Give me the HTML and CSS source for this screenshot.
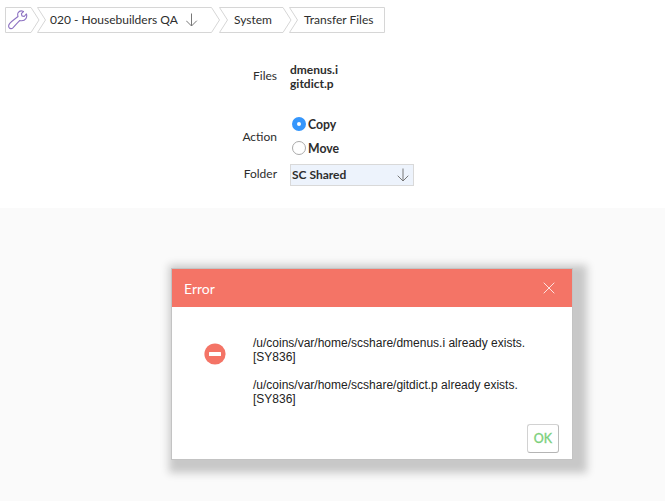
FILE: index.html
```html
<!DOCTYPE html>
<html lang="en">
<head>
<meta charset="utf-8">
<title>Transfer Files</title>
<link rel="stylesheet" href="styles.css">
</head>
<body>
<main class="page">
  <nav class="crumbs">
    <a class="crumb crumb-tool">
      <svg class="shape" width="35" height="26" viewBox="0 0 35 26"><path d="M.5.5H26L34 13l-8 12.500H.5Z"/></svg>
      <svg class="wrench" width="20" height="20" viewBox="0 0 20 20"><path d="M15.500 1.500C13.500.6 11.200 1 10.100 2.800c-.7 1.100-.5 2.300-.1 3.700C7.500 8.700 4.300 10.700 1.800 13.300.7 14.700.3 16.400 1.100 17.600c1 1.300 2.700 1.300 3.800.3 2.400-2.300 4.300-5 6.900-7.400 2.500.5 4.900-.1 6.100-1.900 1-1.500 1.100-3 .5-4.700L16.200 6.500 13.900 5.900 13.400 3.700Z"/></svg>
    </a>
    <a class="crumb crumb-company">
      <svg class="shape" width="183" height="26" viewBox="0 0 183 26"><path d="M.5.5H174.500L182.500 13l-8 12.500H.5L8.500 13Z"/></svg>
      <span>020 - Housebuilders QA</span>
      <svg class="arrow" width="12" height="14" viewBox="0 0 12 14"><path d="M5.500.5V13M.2 7.700 5.500 13l5.300-5.300"/></svg>
    </a>
    <a class="crumb crumb-system">
      <svg class="shape" width="73" height="26" viewBox="0 0 73 26"><path d="M.5.5H64L72 13l-8 12.500H.5L8.500 13Z"/></svg>
      <span>System</span>
    </a>
    <a class="crumb crumb-current">
      <svg class="shape" width="96" height="26" viewBox="0 0 96 26"><path d="M.5.5H95.500V25.500H.5L8.500 13Z"/></svg>
      <span>Transfer Files</span>
    </a>
  </nav>
  <form class="form">
    <div class="row row-files"><span class="label">Files</span><div class="value">dmenus.i<br>gitdict.p</div></div>
    <div class="row row-action"><span class="label">Action</span>
      <div class="options">
        <label class="option"><i class="radio radio-on"></i><span>Copy</span></label>
        <label class="option"><i class="radio"></i><span>Move</span></label>
      </div>
    </div>
    <div class="row row-folder"><span class="label">Folder</span>
      <div class="select">SC Shared
        <svg class="arrow" width="12" height="14" viewBox="0 0 12 14"><path d="M6 .5V13M.7 7.700 6 13l5.300-5.300"/></svg>
      </div>
    </div>
  </form>
</main>
<section class="dialog" role="alertdialog">
  <header class="dialog-head"><span>Error</span>
    <svg class="close" width="12" height="12" viewBox="0 0 12 12"><path d="M.7.7l10.600 10.600M11.300.7.7 11.300"/></svg>
  </header>
  <div class="dialog-body">
    <svg class="stop" width="22" height="22" viewBox="0 0 22 22"><circle cx="11" cy="11" r="10.600"/><rect x="5" y="9" width="12" height="4" rx=".5"/></svg>
    <div class="messages">
      <p>/u/coins/var/home/scshare/dmenus.i already exists.<br>[SY836]</p>
      <p>/u/coins/var/home/scshare/gitdict.p already exists.<br>[SY836]</p>
    </div>
  </div>
  <footer class="dialog-foot"><button class="ok">OK</button></footer>
</section>
</body>
</html>
```
FILE: styles.css
```css
* { box-sizing: border-box; }
body {
  margin: 0;
  height: 501px;
  overflow: hidden;
  background: #fafafa;
  color: #2d2d2d;
  font: 12px/14px Lato, sans-serif;
}
.page { height: 208px; padding: 7px 5px; background: #fff; }

.crumbs { display: flex; height: 26px; }
.crumb { position: relative; display: flex; align-items: center; height: 26px; }
.shape { position: absolute; left: 0; top: 0; fill: #fff; stroke: #d6d6d6; }
.crumb span, .wrench, .crumb .arrow { position: relative; }
.crumb-tool { width: 32px; padding-left: 3px; }
.crumb-company { width: 182px; padding-left: 13px; }
.crumb-system { width: 70px; padding-left: 15px; }
.crumb-current { width: 96px; padding-left: 15px; }
.wrench { fill: none; stroke: #8d72c2; stroke-width: 1.1; stroke-linejoin: round; }
.arrow { fill: none; stroke: #777; }
.crumb .arrow { margin-left: 8px; }

.form { padding-top: 30px; }
.row { display: grid; grid-template-columns: 272px 124px; column-gap: 13px; align-items: center; }
.label { text-align: right; padding-bottom: 2px; }
.value, .options, .select { font-weight: 700; }
.row-files { height: 28px; }
.row-action { margin-top: 21px; height: 48px; }
.row-action .label { padding: 2px 0 0; }
.option { display: flex; align-items: center; gap: 2px; height: 24px; padding-left: 2px; font-size: 12.25px; }
.option span { padding-top: 2px; }
.radio { width: 14px; height: 14px; border: 1px solid #aaa; border-radius: 50%; background: #fff; }
.radio-on { border: 5px solid #3596fc; }
.select {
  display: flex;
  align-items: center;
  justify-content: space-between;
  height: 22px;
  padding: 0 4px 0 1px;
  border: 1px solid #d9d9d9;
  background: #edf3fc;
}
.row-folder { padding-top: 4px; }

.dialog {
  position: absolute;
  left: 171px;
  top: 268px;
  width: 402px;
  height: 192px;
  border: 1px solid #c3c3c3;
  background: #fff;
  box-shadow: 6px 5px 8px 8px #c8c8c8;
}
.dialog-head {
  display: flex;
  align-items: center;
  justify-content: space-between;
  height: 38px;
  padding: 0 17px 0 12px;
  background: #f47466;
  color: #fff;
  font-size: 14px;
}
.dialog-head span { padding-top: 2px; }
.close { margin-top: -1px; fill: none; stroke: #fff; stroke-width: 1; opacity: .8; }
.dialog-body { display: flex; gap: 27px; padding: 29px 0 0 32px; color: #222; font: 12px/14px "Liberation Sans", sans-serif; }
.messages p { margin: 0 0 14px; }
.stop { margin-top: 7px; fill: #f47466; }
.stop rect { fill: #fff; }
.dialog-foot { display: flex; justify-content: flex-end; padding: 4px 13px 0 0; }
.ok {
  width: 32px;
  height: 29px;
  padding: 0;
  border: 1px solid #bbb;
  border-color: #d2d2d2 #bbb #b5b5b5 #d2d2d2;
  border-radius: 3px;
  background: #fff;
  color: #7bd07b;
  font: 12.5px Lato, sans-serif;
  -webkit-text-stroke: .35px #7bd07b;
}
```
